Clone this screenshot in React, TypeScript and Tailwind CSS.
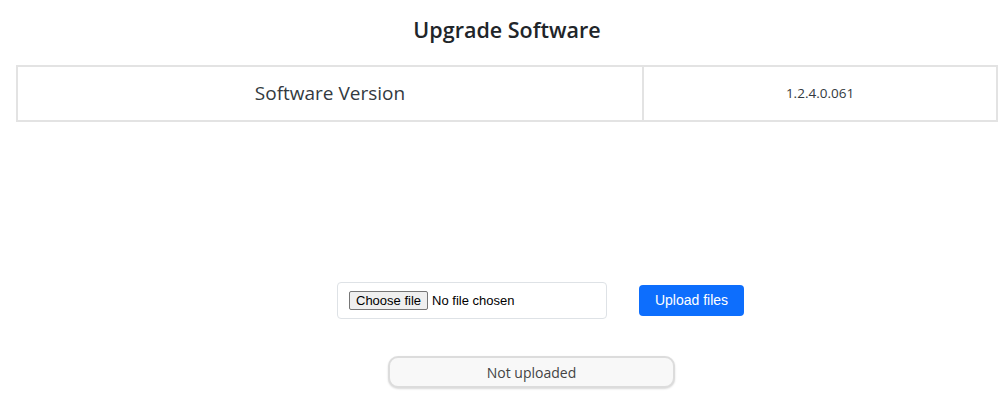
import React from "react";

export default function App() {
  return (
    <div className="w-[1002px] h-[405px] bg-white pl-4 pr-[4px] overflow-hidden" style={{ fontFamily: '"Open Sans", "Noto Sans", sans-serif' }}>
      <h1 className="pt-[15px] text-center text-[21.5px] leading-[30px] font-semibold text-[#212529]">Upgrade Software</h1>
      <div className="mt-[20px] flex h-[57px] border-2 border-[#e3e3e3] text-[#333a40]">
        <div className="flex w-[626px] items-center justify-center border-r-2 border-[#e3e3e3] text-[19px]">Software Version</div>
        <div className="flex flex-1 items-center justify-center text-[13.5px]">1.2.4.0.061</div>
      </div>
      <div className="mt-[160px] flex items-center gap-[32px] pl-[321px]">
        <div className="flex h-[37px] w-[270px] items-center rounded-[4px] border border-[#dee2e6] px-[11px]" style={{ fontFamily: '"Liberation Sans", Arial, sans-serif' }}>
          <span className="flex h-[19px] items-center rounded-[2px] border border-[#767676] bg-[#efefef] px-[6px] text-[13px] text-black">Choose file</span>
          <span className="ml-[4px] text-[13px] text-black">No file chosen</span>
        </div>
        <button className="h-[31px] w-[105px] rounded-[4px] bg-[#0d6efd] text-[14px] text-white" style={{ fontFamily: '"Liberation Sans", Arial, sans-serif' }}>Upload files</button>
      </div>
      <div className="mt-[37px] flex pl-[372px]">
        <div className="flex h-[32px] w-[287px] items-center justify-center rounded-[10px] border-2 border-[#dcdcdc] bg-[#f8f8f8] text-[14px] text-[#444] shadow-[0_1px_2px_rgba(0,0,0,0.15)]">Not uploaded</div>
      </div>
    </div>
  );
}
